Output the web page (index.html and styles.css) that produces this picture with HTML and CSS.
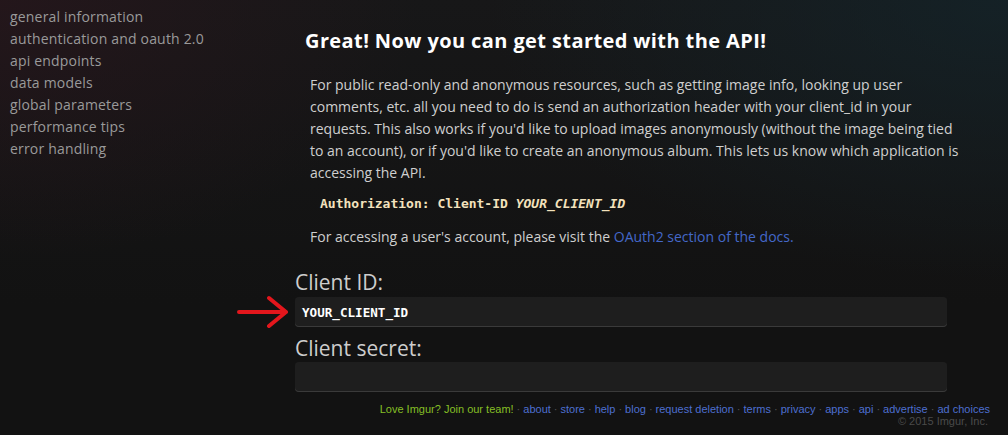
FILE: index.html
```html
<!DOCTYPE html>
<html>
<head>
<meta charset="utf-8">
<link rel="stylesheet" href="styles.css">
</head>
<body>
<div class="page">
  <nav class="sidebar">
    <a>general information</a>
    <a>authentication and oauth 2.0</a>
    <a>api endpoints</a>
    <a>data models</a>
    <a>global parameters</a>
    <a>performance tips</a>
    <a>error handling</a>
  </nav>
  <main class="main">
    <h1 class="title">Great! Now you can get started with the API!</h1>
    <div class="body">
      <p class="para lines">For public read-only and anonymous resources, such as getting image info, looking up user<br>comments, etc. all you need to do is send an authorization header with your client_id in your<br>requests. This also works if you'd like to upload images anonymously (without the image being tied<br>to an account), or if you'd like to create an anonymous album. This lets us know which application is<br>accessing the API.</p>
      <pre class="code">Authorization: Client-ID <i>YOUR_CLIENT_ID</i></pre>
      <p class="para">For accessing a user's account, please visit the <a class="link">OAuth2 section of the docs.</a></p>
    </div>
    <div class="form">
      <label class="label">Client ID:</label>
      <div class="field-row">
        <svg class="arrow" width="54" height="34" viewBox="0 0 54 34"><path d="M3 17 H50 M33 3 L50 17 L33 31" fill="none" stroke="#e3161c" stroke-width="4" stroke-linecap="round" stroke-linejoin="round"/></svg>
        <div class="input">YOUR_CLIENT_ID</div>
      </div>
      <label class="label second">Client secret:</label>
      <div class="input"></div>
    </div>
  </main>
</div>
<footer class="footer">
  <div class="links"><a class="green">Love Imgur? Join our team!</a><span class="sep">·</span><a>about</a><span class="sep">·</span><a>store</a><span class="sep">·</span><a>help</a><span class="sep">·</span><a>blog</a><span class="sep">·</span><a>request deletion</a><span class="sep">·</span><a>terms</a><span class="sep">·</span><a>privacy</a><span class="sep">·</span><a>apps</a><span class="sep">·</span><a>api</a><span class="sep">·</span><a>advertise</a><span class="sep">·</span><a>ad choices</a></div>
  <div class="copy">© 2015 Imgur, Inc.</div>
</footer>
</body>
</html>
```
FILE: styles.css
```css
html, body {
  margin: 0;
  padding: 0;
  height: 435px;
  overflow: hidden;
}
body {
  background-color: #121212;
  background-image:
    radial-gradient(ellipse 420px 260px at 0 0, rgba(40, 22, 28, 0.75), rgba(40, 22, 28, 0) 100%),
    radial-gradient(ellipse 520px 280px at 100% 0, rgba(20, 36, 42, 0.8), rgba(20, 36, 42, 0) 100%),
    linear-gradient(#171718, #121212 70%);
  font-family: "Open Sans", "DejaVu Sans", sans-serif;
}
.page {
  display: flex;
  height: 401px;
}
.sidebar {
  width: 295px;
  flex-shrink: 0;
  padding: 6px 0 0 10px;
  box-sizing: border-box;
  display: flex;
  flex-direction: column;
}
.sidebar a {
  font-size: 14px;
  line-height: 22px;
  letter-spacing: 0.18px;
  color: #9a9a9a;
}
.main {
  width: 652px;
  flex-shrink: 0;
}
.title {
  margin: 28px 0 0 10px;
  font-size: 20px;
  line-height: 26px;
  font-weight: 700;
  letter-spacing: 0.4px;
  color: #fff;
}
.body {
  padding: 0 0 0 15px;
  margin-top: 20px;
}
.para {
  margin: 0;
  font-size: 14px;
  line-height: 22px;
  color: #cfcfcf;
}
.lines {
  white-space: nowrap;
}
.code {
  margin: 11px 0 13px 10px;
  font-family: "DejaVu Sans Mono", monospace;
  font-weight: 700;
  font-size: 13px;
  line-height: 18px;
  color: #f3e2bd;
}
.code i {
  font-style: italic;
}
.link {
  color: #4468c8;
}
.form {
  margin-top: 21px;
  display: flex;
  flex-direction: column;
}
.label {
  font-size: 21px;
  line-height: 26px;
  color: #cdcdcd;
  margin-bottom: 2px;
}
.label.second {
  margin-bottom: 1px;
}
.field-row {
  position: relative;
  margin-bottom: 8px;
}
.arrow {
  position: absolute;
  left: -59px;
  top: -2px;
}
.input {
  height: 30px;
  box-sizing: border-box;
  background: #1e1e1e;
  border-radius: 4px;
  box-shadow: inset 0 -1px 0 #3a3a3a;
  padding: 0 7px;
  font-family: "DejaVu Sans Mono", monospace;
  font-weight: 700;
  font-size: 12.6px;
  line-height: 31px;
  color: #fff;
}
.footer {
  text-align: right;
  padding-right: 18px;
  font-family: "Liberation Sans", Arial, sans-serif;
  font-size: 11px;
}
.links {
  line-height: 16px;
}
.links a {
  color: #4d6fd0;
}
.links a.green {
  color: #85bf25;
}
.sep {
  color: #555;
  padding: 0 3px;
}
.copy {
  color: #4a4a4a;
  line-height: 9px;
  padding-right: 2px;
}
```
